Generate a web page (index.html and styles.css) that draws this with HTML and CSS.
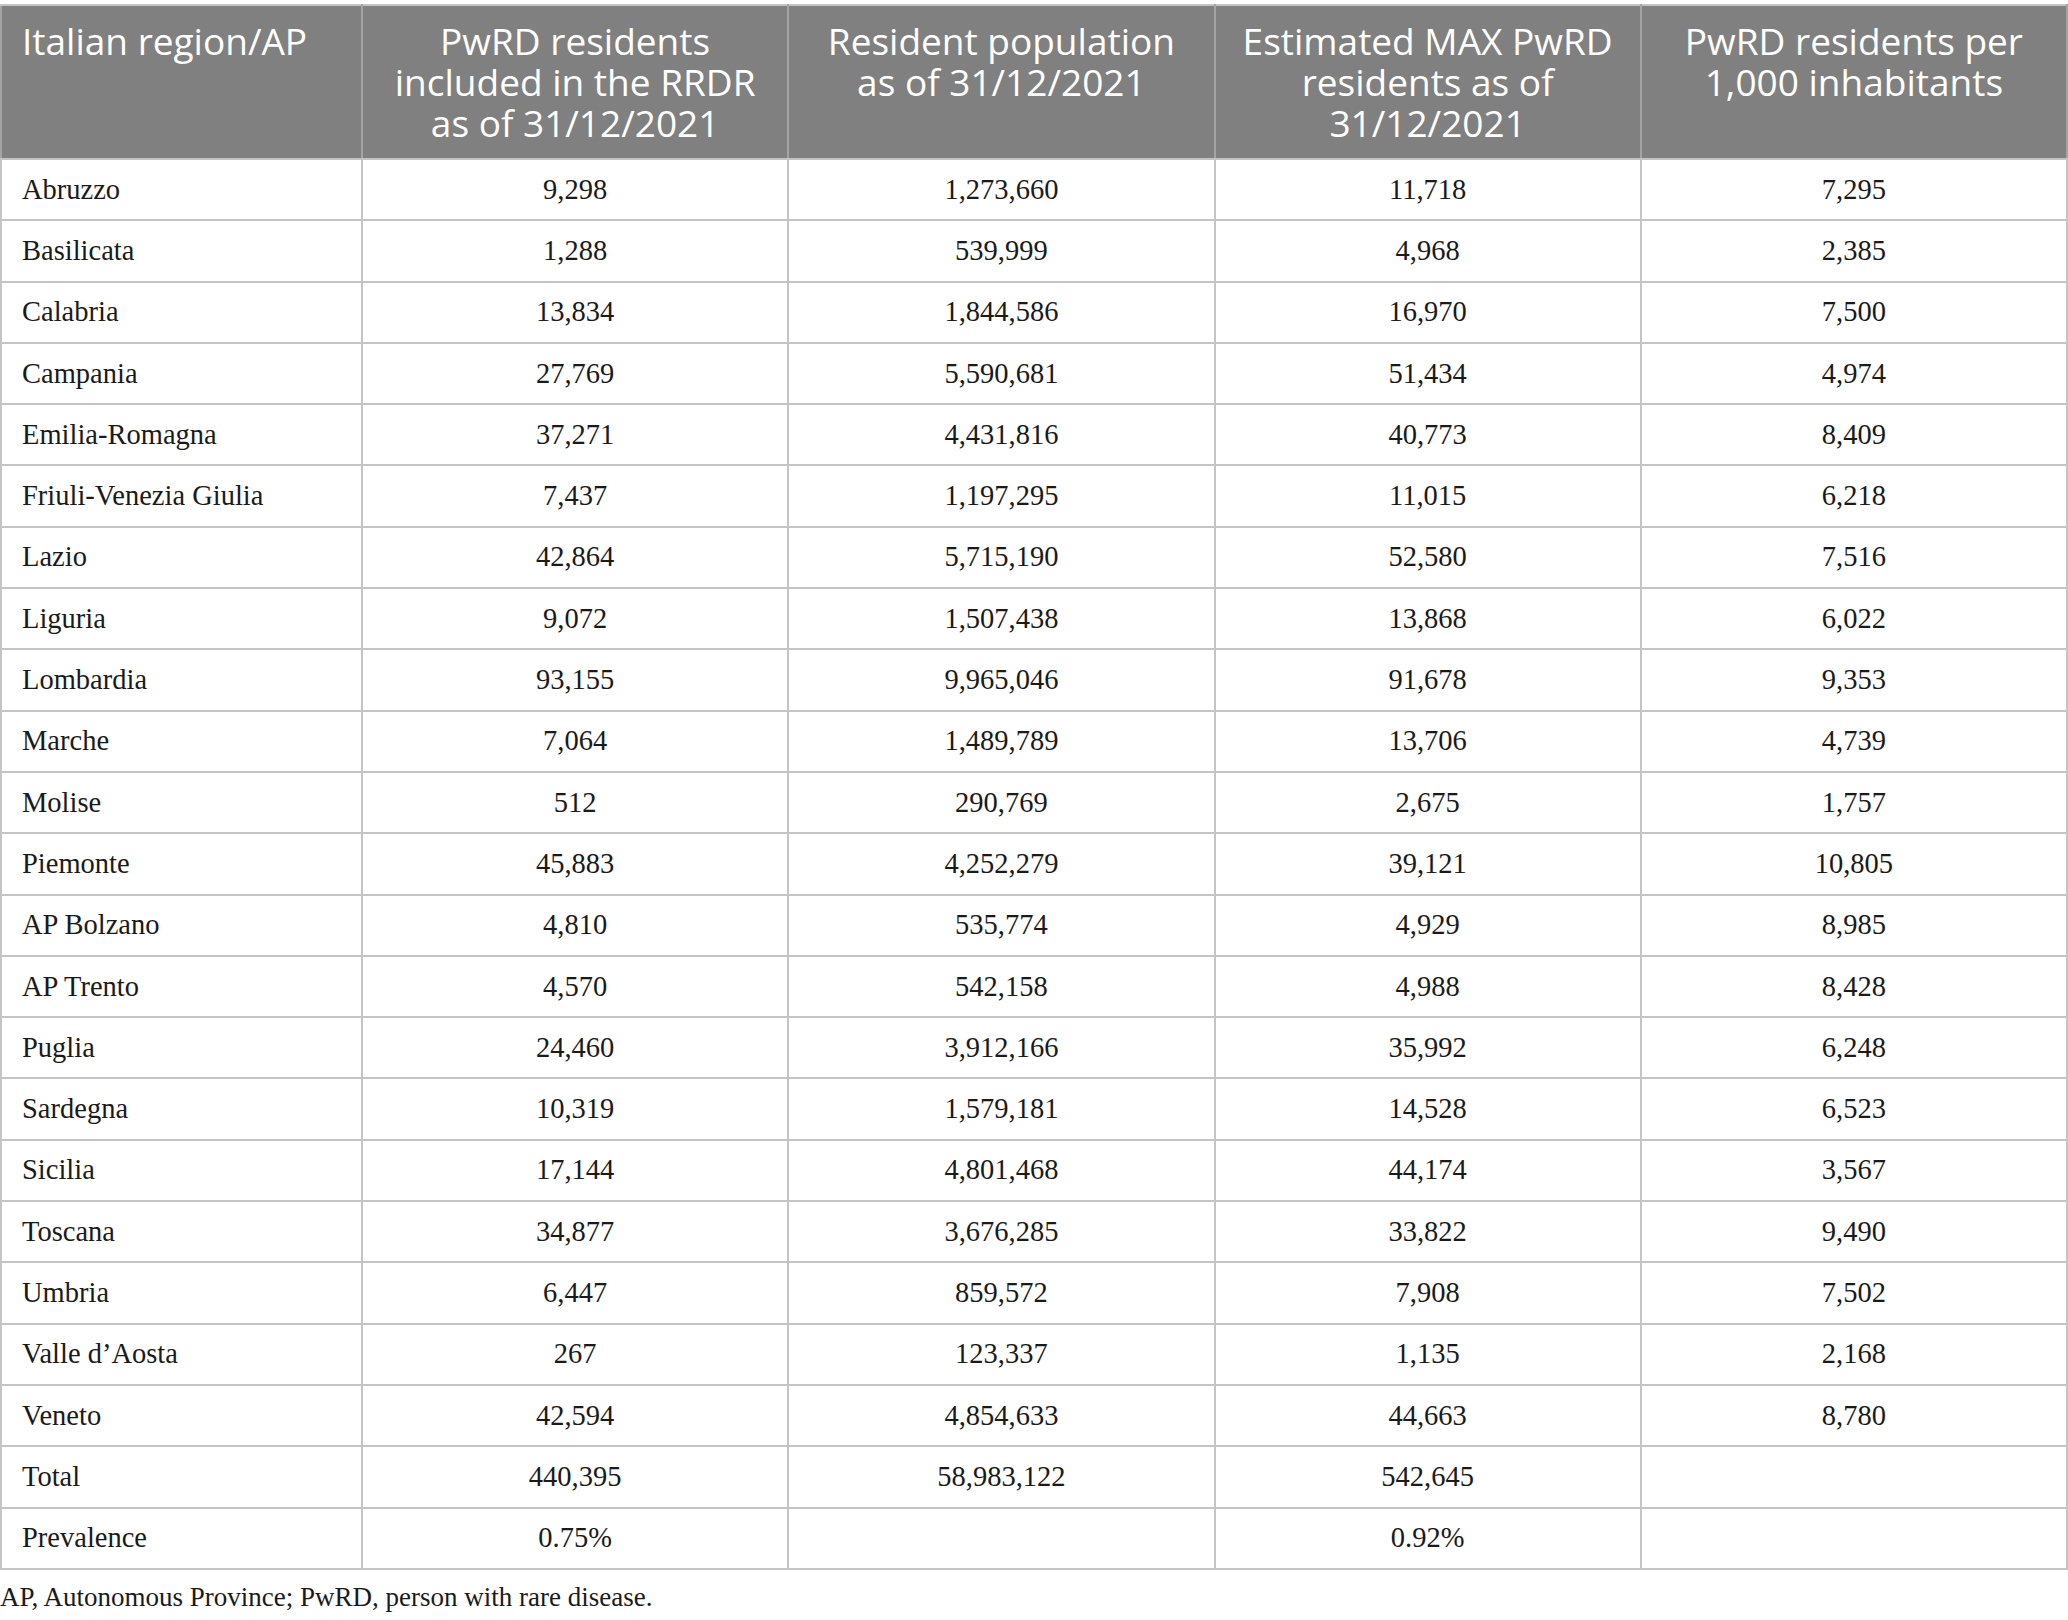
FILE: index.html
```html
<!DOCTYPE html>
<html>
<head>
<meta charset="utf-8">
<link rel="stylesheet" href="styles.css">
</head>
<body>
<div class="page">
<table class="data">
  <colgroup>
    <col class="c-region">
    <col class="c-num">
    <col class="c-num">
    <col class="c-num">
    <col class="c-num">
  </colgroup>
  <thead>
    <tr>
      <th class="left">Italian region/AP</th>
      <th>PwRD residents<br>included in the RRDR<br>as of 31/12/2021</th>
      <th>Resident population<br>as of 31/12/2021</th>
      <th>Estimated MAX PwRD<br>residents as of<br>31/12/2021</th>
      <th>PwRD residents per<br>1,000 inhabitants</th>
    </tr>
  </thead>
  <tbody>
    <tr><td class="left">Abruzzo</td><td>9,298</td><td>1,273,660</td><td>11,718</td><td>7,295</td></tr>
    <tr><td class="left">Basilicata</td><td>1,288</td><td>539,999</td><td>4,968</td><td>2,385</td></tr>
    <tr><td class="left">Calabria</td><td>13,834</td><td>1,844,586</td><td>16,970</td><td>7,500</td></tr>
    <tr><td class="left">Campania</td><td>27,769</td><td>5,590,681</td><td>51,434</td><td>4,974</td></tr>
    <tr><td class="left">Emilia-Romagna</td><td>37,271</td><td>4,431,816</td><td>40,773</td><td>8,409</td></tr>
    <tr><td class="left">Friuli-Venezia Giulia</td><td>7,437</td><td>1,197,295</td><td>11,015</td><td>6,218</td></tr>
    <tr><td class="left">Lazio</td><td>42,864</td><td>5,715,190</td><td>52,580</td><td>7,516</td></tr>
    <tr><td class="left">Liguria</td><td>9,072</td><td>1,507,438</td><td>13,868</td><td>6,022</td></tr>
    <tr><td class="left">Lombardia</td><td>93,155</td><td>9,965,046</td><td>91,678</td><td>9,353</td></tr>
    <tr><td class="left">Marche</td><td>7,064</td><td>1,489,789</td><td>13,706</td><td>4,739</td></tr>
    <tr><td class="left">Molise</td><td>512</td><td>290,769</td><td>2,675</td><td>1,757</td></tr>
    <tr><td class="left">Piemonte</td><td>45,883</td><td>4,252,279</td><td>39,121</td><td>10,805</td></tr>
    <tr><td class="left">AP Bolzano</td><td>4,810</td><td>535,774</td><td>4,929</td><td>8,985</td></tr>
    <tr><td class="left">AP Trento</td><td>4,570</td><td>542,158</td><td>4,988</td><td>8,428</td></tr>
    <tr><td class="left">Puglia</td><td>24,460</td><td>3,912,166</td><td>35,992</td><td>6,248</td></tr>
    <tr><td class="left">Sardegna</td><td>10,319</td><td>1,579,181</td><td>14,528</td><td>6,523</td></tr>
    <tr><td class="left">Sicilia</td><td>17,144</td><td>4,801,468</td><td>44,174</td><td>3,567</td></tr>
    <tr><td class="left">Toscana</td><td>34,877</td><td>3,676,285</td><td>33,822</td><td>9,490</td></tr>
    <tr><td class="left">Umbria</td><td>6,447</td><td>859,572</td><td>7,908</td><td>7,502</td></tr>
    <tr><td class="left">Valle d’Aosta</td><td>267</td><td>123,337</td><td>1,135</td><td>2,168</td></tr>
    <tr><td class="left">Veneto</td><td>42,594</td><td>4,854,633</td><td>44,663</td><td>8,780</td></tr>
    <tr><td class="left">Total</td><td>440,395</td><td>58,983,122</td><td>542,645</td><td></td></tr>
    <tr><td class="left">Prevalence</td><td>0.75%</td><td></td><td>0.92%</td><td></td></tr>
  </tbody>
</table>
<p class="note">AP, Autonomous Province; PwRD, person with rare disease.</p>
</div>
</body>
</html>
```

FILE: styles.css
```css
html, body {
  margin: 0;
  padding: 0;
  background: #ffffff;
}

.page {
  padding-top: 4px;
  width: 2068px;
}

.data {
  width: 2068px;
  border-collapse: collapse;
  table-layout: fixed;
  border: 2px solid #c4c4c4;
}

.c-region {
  width: 361px;
}

.data th {
  background: #7f807f;
  color: #ffffff;
  font-family: "Open Sans", "Noto Sans", sans-serif;
  font-weight: 400;
  font-size: 37px;
  line-height: 41px;
  white-space: nowrap;
  text-align: center;
  vertical-align: top;
  padding: 14px 6px 15px;
  height: 123px;
  border: 2px solid #a3a4a3;
  border-top-color: #c4c4c4;
  border-bottom-color: #c4c4c4;
}

.data th.left {
  text-align: left;
  padding-left: 20px;
}

.data td {
  font-family: "Liberation Serif", "Times New Roman", serif;
  font-size: 28.5px;
  color: #1a1a1a;
  text-align: center;
  vertical-align: middle;
  height: 59.3px;
  padding: 0 10px;
  border: 2px solid #c4c4c4;
}

.data td.left {
  text-align: left;
  padding-left: 20px;
}

.note {
  margin: 9px 0 0;
  font-family: "Liberation Serif", "Times New Roman", serif;
  font-size: 27px;
  color: #1a1a1a;
  line-height: 36px;
}
```
